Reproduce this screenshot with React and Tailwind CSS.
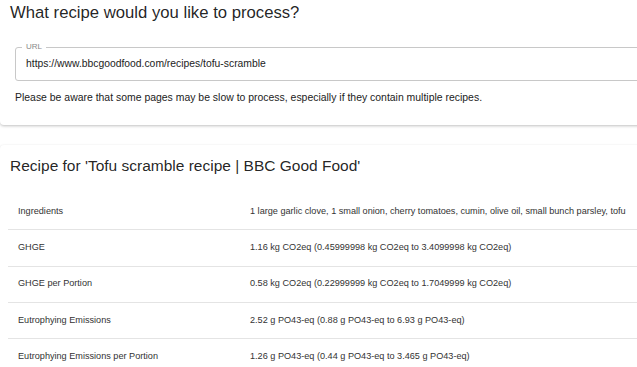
const rows = [
  ["Ingredients", "1 large garlic clove, 1 small onion, cherry tomatoes, cumin, olive oil, small bunch parsley, tofu"],
  ["GHGE", "1.16 kg CO2eq (0.45999998 kg CO2eq to 3.4099998 kg CO2eq)"],
  ["GHGE per Portion", "0.58 kg CO2eq (0.22999999 kg CO2eq to 1.7049999 kg CO2eq)"],
  ["Eutrophying Emissions", "2.52 g PO43-eq (0.88 g PO43-eq to 6.93 g PO43-eq)"],
  ["Eutrophying Emissions per Portion", "1.26 g PO43-eq (0.44 g PO43-eq to 3.465 g PO43-eq)"],
];

export default function App() {
  return (
    <div
      className="w-[637px] h-[367px] overflow-hidden bg-white text-[rgba(0,0,0,0.87)]"
      style={{ fontFamily: '"Liberation Sans", Arial, sans-serif' }}
    >
      {/* URL card */}
      <div className="w-[660px] mt-[-6px] rounded bg-white shadow-[0_1px_3px_rgba(0,0,0,0.25)] pl-[10px] pt-[7px] pb-[20px]">
        <h2 className="text-[16.7px] leading-[24px] font-normal">
          What recipe would you like to process?
        </h2>
        <div className="ml-[5px] mt-[22px] relative h-[34px] border border-[#c8c8c8] rounded-[3px] flex items-center pl-[10px]">
          <span className="absolute left-[6px] top-[-6px] bg-white px-[4px] text-[8px] leading-[10px] text-[#8a8a8a]">
            URL
          </span>
          <span className="text-[10.35px] text-[#222]">
            https://www.bbcgoodfood.com/recipes/tofu-scramble
          </span>
        </div>
        <p className="ml-[5px] mt-[10px] text-[10.45px] leading-[14px] text-[#222]">
          Please be aware that some pages may be slow to process, especially if they contain multiple recipes.
        </p>
      </div>

      {/* Results card */}
      <div className="w-[660px] mt-[20px] rounded bg-white shadow-[0_1px_3px_rgba(0,0,0,0.2)] pl-[8px] pt-[9px]">
        <h2 className="ml-[2px] text-[15.5px] leading-[24px] font-normal">
          Recipe for 'Tofu scramble recipe | BBC Good Food'
        </h2>
        <div className="mt-[16px]">
          {rows.map(([label, value]) => (
            <div
              key={label}
              className="h-[36.3px] flex items-center border-b border-[#e4e4e4] text-[9.15px] text-[#333]"
            >
              <div className="w-[242px] pl-[10px]">{label}</div>
              <div>{value}</div>
            </div>
          ))}
        </div>
      </div>
    </div>
  );
}
